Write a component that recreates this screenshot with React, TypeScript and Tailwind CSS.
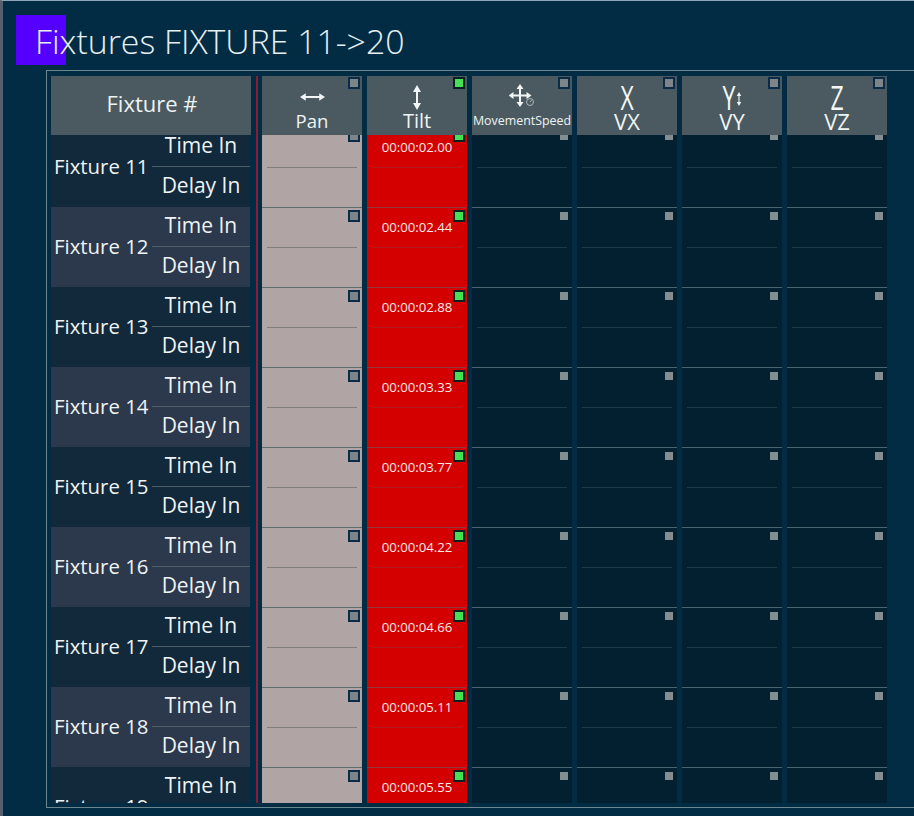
const font = { fontFamily: '"Open Sans", sans-serif' }

const rows = [
  { name: 'Fixture 11', time: '00:00:02.00' },
  { name: 'Fixture 12', time: '00:00:02.44' },
  { name: 'Fixture 13', time: '00:00:02.88' },
  { name: 'Fixture 14', time: '00:00:03.33' },
  { name: 'Fixture 15', time: '00:00:03.77' },
  { name: 'Fixture 16', time: '00:00:04.22' },
  { name: 'Fixture 17', time: '00:00:04.66' },
  { name: 'Fixture 18', time: '00:00:05.11' },
  { name: 'Fixture 19', time: '00:00:05.55' }
]

const Check = ({ on, bare, top }: { on?: boolean; bare?: boolean; top?: boolean }): JSX.Element => (
  <div
    className={`absolute ${top ? 'top-[1px]' : 'top-[2px]'} right-[2px] w-[12px] h-[12px] flex items-center justify-center ${
      bare ? '' : on ? 'bg-[#08201f]' : 'bg-[#0a2c48]'
    }`}
  >
    <div
      className={`w-[8px] h-[8px] ${bare ? 'bg-[#838d92]' : on ? 'bg-[#46e054]' : 'bg-[#7d8589]'}`}
    />
  </div>
)

const ArrowH = (): JSX.Element => (
  <svg width="25" height="10" viewBox="0 0 26 10" fill="#f2f5f5">
    <path d="M0 5l6-4v3h14V1l6 4-6 4V6H6v3z" />
  </svg>
)

const ArrowV = ({ w = 10, h = 25 }: { w?: number; h?: number }): JSX.Element => (
  <svg width={w} height={h} viewBox="0 0 10 25" fill="#f2f5f5">
    <path d="M5 0l4 7H6v11h3l-4 7-4-7h3V7H1z" />
  </svg>
)

const MoveIcon = (): JSX.Element => (
  <svg width="30" height="24" viewBox="0 0 30 24" fill="#f2f5f5" className="ml-[4px]">
    <path d="M11 0l3.500 5h-2.500v5.500h5.500V8l5 3.500-5 3.500v-2.500H12v5.500h2.500L11 23l-3.500-5H10v-5.500H4.500V15l-5-3.500 5-3.500v2.500H10V5H7.500z" />
    <circle cx="21" cy="18" r="3.500" fill="none" stroke="#c4cdd0" strokeWidth="0.8" />
    <path d="M21 18l1.600-1.800" stroke="#c4cdd0" strokeWidth="0.8" />
  </svg>
)

const Letter = ({ children }: { children: string }): JSX.Element => (
  <span className="block scale-x-[0.72] text-[32px] leading-[26px] text-[#f4f7f7]" style={font}>
    {children}
  </span>
)

const headers = [
  { label: 'Pan', icon: <ArrowH />, pad: 'pt-[16px]', size: 'text-[18.500px]', on: false },
  { label: 'Tilt', icon: <ArrowV />, pad: 'pt-[9px]', size: 'text-[20px]', on: true },
  { label: 'MovementSpeed', icon: <MoveIcon />, pad: 'pt-[8px]', size: 'text-[12.400px]', on: false },
  { label: 'VX', icon: <Letter>X</Letter>, pad: 'pt-[9px]', size: 'text-[22px]', on: false },
  {
    label: 'VY',
    icon: (
      <div className="flex items-center -ml-[2px]">
        <Letter>Y</Letter>
        <div className="-ml-[2px] mt-[2px]">
          <ArrowV w={6} h={14} />
        </div>
      </div>
    ),
    pad: 'pt-[9px]',
    size: 'text-[22px]',
    on: false
  },
  { label: 'VZ', icon: <Letter>Z</Letter>, pad: 'pt-[9px]', size: 'text-[22px]', on: false }
]

const HeaderCell = ({ item }: { item: (typeof headers)[number] }): JSX.Element => (
  <div className="relative w-[100px] h-[59px] bg-[#4b5a60] flex flex-col items-center">
    <Check on={item.on} top />
    <div className={`h-[35px] flex items-start justify-center ${item.pad}`}>{item.icon}</div>
    <div
      className={`h-[20px] flex items-center text-[#eef3f3] whitespace-nowrap ${item.size}`}
      style={font}
    >
      {item.label}
    </div>
  </div>
)

const Cell = ({ kind, time }: { kind: 'pan' | 'tilt' | 'empty'; time?: string }): JSX.Element => {
  const styles = {
    pan: 'bg-[#b0a4a4] border-[#5e6a6c]',
    tilt: 'bg-[#d40000] border-[#93393c]',
    empty: 'bg-[#02202f] border-[#48656f]'
  }
  const line = {
    pan: 'bg-[#7f7c7b]',
    tilt: 'bg-[#b21c1c]',
    empty: 'bg-[#1d3a47]'
  }
  return (
    <div className={`relative w-[100px] h-[80px] border-t flex flex-col ${styles[kind]}`}>
      <Check on={kind === 'tilt'} bare={kind === 'empty'} />
      <div
        className="h-[39px] flex items-center justify-center text-[13.200px] text-[#f6e9e6] pt-[1px]"
        style={font}
      >
        {time}
      </div>
      <div className={`mx-[5px] h-px ${line[kind]}`} />
    </div>
  )
}

const Row = ({ name, time, even }: { name: string; time: string; even: boolean }): JSX.Element => (
  <div className="flex h-[80px]">
    <div
      className={`w-[199px] h-[80px] flex items-center text-[#eef3f3] ${
        even ? 'bg-[#2c394c]' : 'bg-[#11293a]'
      }`}
      style={font}
    >
      <div className="w-[100px] pl-[3px] pb-[2px] text-[20.400px] whitespace-nowrap">{name}</div>
      <div className="flex-1 flex flex-col items-center h-[80px] text-[21px] pl-[1px]">
        <div className="h-[39px] w-full flex items-center justify-center pb-[1px]">Time In</div>
        <div className="h-px w-full bg-[#4d6068]" />
        <div className="h-[40px] w-full flex items-center justify-center pb-[2px]">Delay In</div>
      </div>
    </div>
    <div className="w-[12px] flex justify-center pl-[2px]">
      <div className="w-[1.500px] bg-[#8c1c33]" />
    </div>
    <div className="flex gap-[5px]">
      <Cell kind="pan" />
      <Cell kind="tilt" time={time} />
      <Cell kind="empty" />
      <Cell kind="empty" />
      <Cell kind="empty" />
      <Cell kind="empty" />
    </div>
  </div>
)

const App = (): JSX.Element => {
  return (
    <div className="relative w-[914px] h-[816px] overflow-hidden bg-[#022c43] border-t border-l-[3px] border-t-[#8fa6b8] border-l-[#56606e]">
      <div className="absolute left-[13px] top-[14px] w-[50px] h-[50px] bg-[#5500ff]" />
      <div
        className="relative h-[69px] pl-[32px] pt-[15px] text-[33.800px] leading-[50px] font-light text-[#e6eff2] whitespace-nowrap"
        style={font}
      >
        Fixtures FIXTURE 11-&gt;20
      </div>
      <div className="ml-[43px] h-[738px] border-t border-l border-b border-[#6d8790] pl-[4px] pt-[5px]">
        <div className="flex h-[59px]">
          <div
            className="w-[200px] pb-[4px] pl-[2px] bg-[#4b5a60] flex items-center justify-center text-[22px] text-[#eef3f3]"
            style={font}
          >
            Fixture #
          </div>
          <div className="w-[11px] flex justify-center pl-[1px]">
            <div className="w-[1.500px] bg-[#8c1c33]" />
          </div>
          <div className="flex gap-[5px]">
            {headers.map((item) => (
              <HeaderCell key={item.label} item={item} />
            ))}
          </div>
        </div>
        <div className="h-[668px] overflow-hidden">
          <div className="-mt-[8px]">
            {rows.map((row, i) => (
              <Row key={row.name} name={row.name} time={row.time} even={i % 2 === 1} />
            ))}
          </div>
        </div>
      </div>
    </div>
  )
}

export default App
